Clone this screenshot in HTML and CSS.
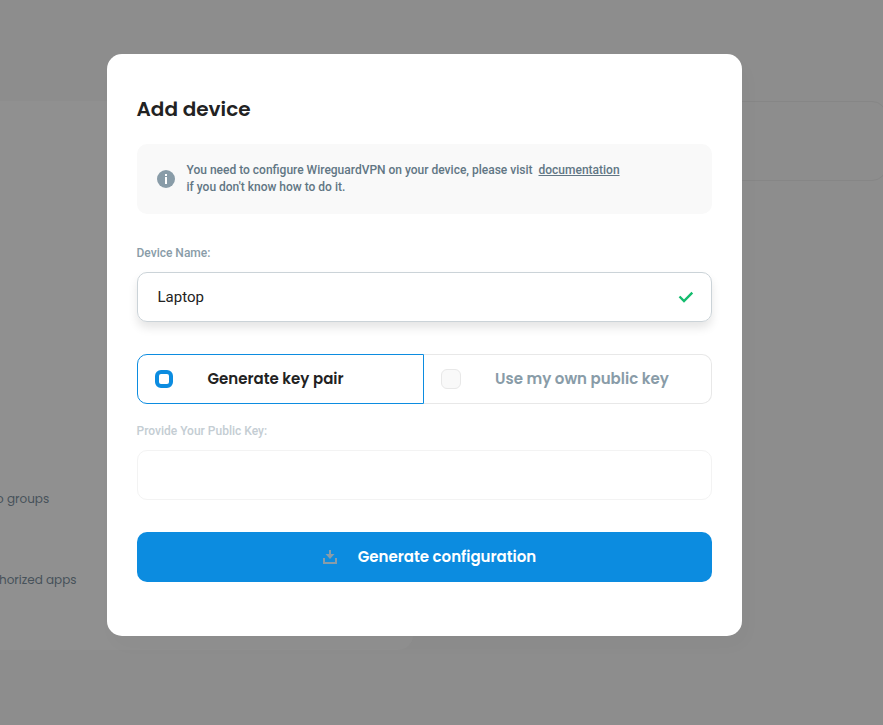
FILE: index.html
```html
<!DOCTYPE html>
<html lang="en">
<head>
<meta charset="utf-8">
<title>Add device</title>
<link rel="stylesheet" href="styles.css">
</head>
<body>
<main class="page">
  <section class="profile-card">
    <p class="profile-label groups">o groups</p>
    <p class="profile-label apps">horized apps</p>
  </section>
  <section class="device-card"></section>
</main>
<div class="overlay">
  <form class="modal">
    <h1 class="title">Add device</h1>
    <div class="message">
      <svg class="info-icon" width="18" height="18" viewBox="0 0 18 18"><circle cx="9" cy="9" r="9" fill="#899ca8"/><path d="M8 4h2v2H8zM8 7h2v7H8z" fill="#fff"/></svg>
      <p class="message-text">You need to configure WireguardVPN on your device, please visit&nbsp; <a class="link">documentation</a><br>if you don't know how to do it.</p>
    </div>
    <label class="label">Device Name:</label>
    <div class="input">
      <span>Laptop</span>
      <svg width="16" height="12" viewBox="0 0 16 12"><path d="M1.5 5.5 6 10l8.3-8.3" fill="none" stroke="#14bc6e" stroke-width="2.4"/></svg>
    </div>
    <div class="toggle">
      <div class="option active"><i class="check"></i><span>Generate key pair</span></div>
      <div class="option"><i class="check"></i><span>Use my own public key</span></div>
    </div>
    <label class="label disabled">Provide Your Public Key:</label>
    <div class="input empty"></div>
    <div class="submit">
      <svg width="14" height="14" viewBox="0 0 14 14"><path d="M1 8v5h12V8" fill="none" stroke="#899ca8" stroke-width="2"/><path d="M6 0h2v4h3.5L7 9 2.500 4H6z" fill="#899ca8"/></svg>
      <span>Generate configuration</span>
    </div>
  </form>
</div>
</body>
</html>
```
FILE: styles.css
```css
* { box-sizing: border-box; }
body { margin: 0; width: 883px; height: 725px; overflow: hidden; background: #8d8d8d; font-family: Roboto, sans-serif; }
h1, p { margin: 0; }
.page { display: grid; grid-template-columns: 413px 1fr; gap: 20px; padding-top: 101px; align-items: start; }
.profile-card { height: 549px; padding-top: 388px; background: #909090; border-radius: 0 0 15px 0; }
.profile-label { font: 400 12px/20px Poppins, Lato, sans-serif; color: #47525a; white-space: nowrap; }
.groups { margin-left: -4px; }
.apps { margin-top: 61px; margin-left: -1px; }
.device-card { height: 80px; margin-right: -4px; border: 1px solid #868686; border-radius: 15px; }
.overlay { position: absolute; inset: 0; padding: 54px 0 0 106.5px; }
.modal { width: 635px; height: 582px; padding: 40px 30px; background: #fff; border-radius: 15px; box-shadow: 5px 10px 20px rgba(0,0,0,.02); }
.title { font: 600 20px/30px Poppins, Inter, sans-serif; color: #222; }
.message { display: flex; align-items: center; gap: 12px; height: 70px; margin-top: 20px; padding: 0 20px; background: #f9f9f9; border-radius: 10px; }
.info-icon { flex: none; }
.message-text { font-size: 12px; line-height: 17px; font-weight: 500; color: #617684; white-space: nowrap; }
.link { text-decoration: underline; }
.label { display: block; margin-top: 31px; font-size: 12px; line-height: 16px; font-weight: 500; color: #899ca8; }
.input { display: flex; align-items: center; justify-content: space-between; height: 50px; margin-top: 11px; padding: 0 17px 0 20px; border: 1px solid #cbd3d8; border-radius: 10px; font-size: 15px; color: #222; box-shadow: 0 6px 10px rgba(0,0,0,.1); }
.toggle { display: grid; grid-template-columns: 1fr 1fr; height: 50px; margin-top: 32px; font: 600 15px/22px Poppins, Inter, sans-serif; color: #899ca8; }
.option { display: flex; align-items: center; gap: 34px; padding-left: 17px; border: 1px solid #e8e8e8; border-left: 0; border-radius: 0 10px 10px 0; white-space: nowrap; }
.active { gap: 35px; border: 1px solid #0c8ce0; border-radius: 10px 0 0 10px; color: #222; }
.check { width: 20px; height: 20px; border: 1px solid #e8e8e8; border-radius: 6px; background: #f9f9f9; }
.active .check { width: 18px; height: 18px; border: 4px solid #0c8ce0; background: #fff; }
.label.disabled { margin-top: 19px; color: #c4cdd3; }
.input.empty { border-color: #f3f3f3; box-shadow: none; }
.submit { display: flex; align-items: center; justify-content: center; gap: 21px; height: 50px; margin-top: 32px; padding-left: 11px; border-radius: 10px; background: #0c8ce0; color: #fff; font: 600 15px/22px Poppins, Inter, sans-serif; }
```
